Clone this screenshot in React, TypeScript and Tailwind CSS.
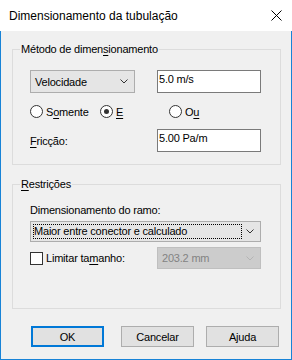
import type { ReactNode } from "react";

const Chevron = ({ disabled }: { disabled?: boolean }) => (
  <svg width="8" height="5" viewBox="0 0 8 5" className="shrink-0">
    <path d="M0.5 0.5L4 4L7.5 0.5" fill="none" stroke={disabled ? "#b4b4b4" : "#333333"} strokeWidth="1" />
  </svg>
);

const Radio = ({ checked, className, children }: { checked?: boolean; className?: string; children: ReactNode }) => (
  <div className={`flex items-center gap-[3px] ${className ?? ""}`}>
    <span className="flex h-[13px] w-[13px] items-center justify-center rounded-full border border-[#333333] bg-white">
      {checked && <span className="h-[5px] w-[5px] rounded-full bg-[#333333]" />}
    </span>
    <span className="leading-[16px]">{children}</span>
  </div>
);

const TextBox = ({ value }: { value: string }) => (
  <div className="h-[23px] w-[104px] border border-[#7a7a7a] bg-white pl-[1px] leading-[16px]">{value}</div>
);

const Group = ({ title, className, children }: { title: ReactNode; className?: string; children: ReactNode }) => (
  <fieldset className={`border border-[#dcdcdc] ${className ?? ""}`}>
    <legend className="ml-[7px] px-[1px] leading-[17px]">{title}</legend>
    {children}
  </fieldset>
);

const Button = ({ label, primary, className }: { label: string; primary?: boolean; className?: string }) => (
  <button
    className={`flex h-[21px] w-[73px] items-center justify-center bg-[#e1e1e1] leading-[16px] ${
      primary ? "border-2 border-[#0078d7]" : "border border-[#adadad]"
    } ${className ?? ""}`}
  >
    {label}
  </button>
);

export default function App() {
  return (
    <div className="flex h-[360px] w-[292px] flex-col font-['Liberation_Sans',Arial,sans-serif] text-black">
      <div className="flex h-[31px] shrink-0 items-center justify-between bg-white pl-[9px] pr-[10px] text-[12px] leading-[16px]">
        <span>Dimensionamento da tubulação</span>
        <svg width="11" height="11" viewBox="0 0 11 11">
          <path d="M0.5 0.5L10.5 10.5M10.5 0.5L0.5 10.5" stroke="#000" strokeWidth="1" />
        </svg>
      </div>

      <div className="flex-1 border-x border-b border-[#1883d7] bg-[#f0f0f0] pl-[11px] pr-[10px] pt-[10px] text-[11px] tracking-[-0.2px]">
        <Group
          title={
            <>
              Método de dimen<u className="underline-offset-2">s</u>ionamento
            </>
          }
        >
          <div className="pl-[17px] pr-[19px] pt-[12px] pb-[12px]">
            <div className="flex items-center justify-between">
              <div className="flex h-[23px] w-[105px] items-center justify-between border border-[#adadad] bg-[#e5e5e5] pl-[4px] pr-[6px]">
                <span className="leading-[16px]">Velocidade</span>
                <Chevron />
              </div>
              <TextBox value="5.0 m/s" />
            </div>

            <div className="mt-[12px] flex h-[13px] items-center">
              <Radio className="w-[70px]">
                S<u className="underline-offset-2">o</u>mente
              </Radio>
              <Radio checked className="w-[69px]">
                <u className="underline-offset-2">E</u>
              </Radio>
              <Radio>
                O<u className="underline-offset-2">u</u>
              </Radio>
            </div>

            <div className="mt-[11px] flex items-center justify-between">
              <span className="leading-[16px]">
                <u className="underline-offset-2">F</u>ricção:
              </span>
              <TextBox value="5.00 Pa/m" />
            </div>
          </div>
        </Group>

        <Group
          className="mt-[11px]"
          title={
            <>
              <u className="underline-offset-2">R</u>estrições
            </>
          }
        >
          <div className="pl-[17px] pr-[19px] pt-[9px] pb-[39px]">
            <div className="leading-[16px]">Dimensionamento do ramo:</div>
            <div className="mt-[3px] flex h-[21px] items-center border border-[#adadad] bg-[#e5e5e5] p-[2px]">
              <div className="flex h-[15px] w-[209px] items-center border border-dotted border-black leading-[13px]">
                Maior entre conector e calculado
              </div>
              <div className="flex flex-1 justify-center">
                <Chevron />
              </div>
            </div>
            <div className="mt-[5px] flex items-center justify-between">
              <div className="flex items-center gap-[3px]">
                <span className="h-[13px] w-[13px] border border-[#333333] bg-white" />
                <span className="leading-[16px]">
                  Limitar ta<u className="underline-offset-2">m</u>anho:
                </span>
              </div>
              <div className="flex h-[22px] w-[104px] items-center justify-between border border-[#bfbfbf] bg-[#cccccc] pl-[4px] pr-[6px] text-[#838383]">
                <span className="leading-[16px]">203.2 mm</span>
                <Chevron disabled />
              </div>
            </div>
          </div>
        </Group>

        <div className="mt-[17px] flex pl-[19px]">
          <Button label="OK" primary />
          <Button label="Cancelar" className="ml-[17px]" />
          <Button label="Ajuda" className="ml-[12px]" />
        </div>
      </div>
    </div>
  );
}
